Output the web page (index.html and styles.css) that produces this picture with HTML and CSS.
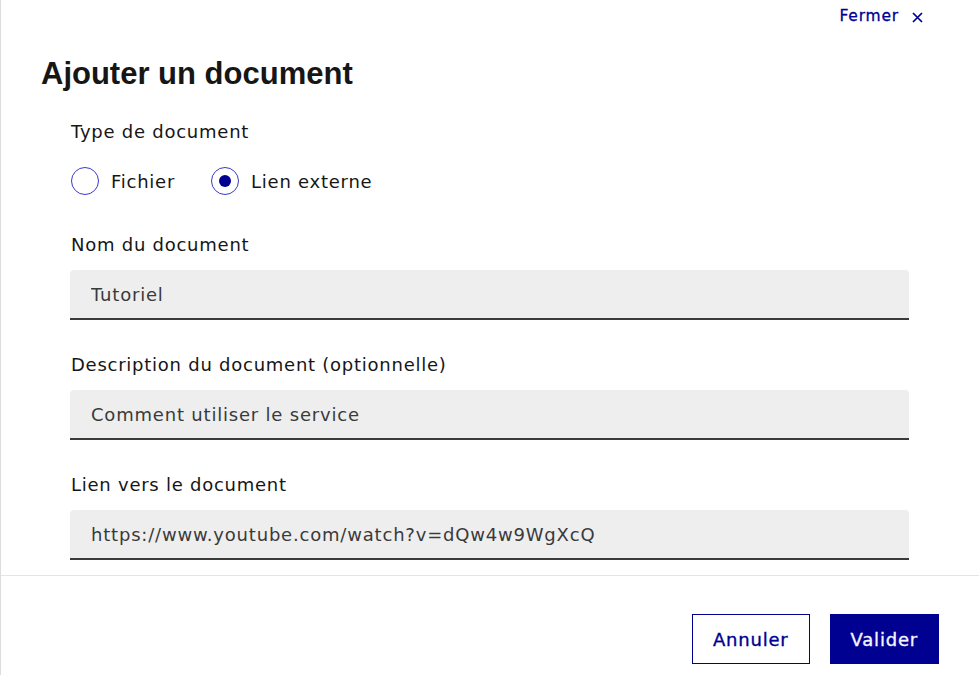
FILE: index.html
```html
<!DOCTYPE html>
<html lang="fr">
<head>
<meta charset="utf-8">
<title>Ajouter un document</title>
<link rel="stylesheet" href="styles.css">
</head>
<body>
<div class="modal">
  <div class="modal-body">
    <div class="close-row">
      <button class="close-btn" type="button">Fermer
        <svg class="close-icon" width="11" height="11" viewBox="0 0 11 11" aria-hidden="true"><path d="M1 1 L10 10 M10 1 L1 10" stroke="#000091" stroke-width="1.7" fill="none"/></svg>
      </button>
    </div>
    <h1 class="title">Ajouter un document</h1>
    <form class="form">
      <fieldset class="radio-group">
        <legend class="label">Type de document</legend>
        <div class="radios">
          <label class="radio"><input type="radio" name="type"><span>Fichier</span></label>
          <label class="radio"><input type="radio" name="type" checked><span>Lien externe</span></label>
        </div>
      </fieldset>
      <div class="field">
        <label class="label" for="nom">Nom du document</label>
        <input class="input" id="nom" type="text" value="Tutoriel">
      </div>
      <div class="field">
        <label class="label" for="desc">Description du document (optionnelle)</label>
        <input class="input" id="desc" type="text" value="Comment utiliser le service">
      </div>
      <div class="field">
        <label class="label" for="lien">Lien vers le document</label>
        <input class="input" id="lien" type="text" value="https://www.youtube.com/watch?v=dQw4w9WgXcQ">
      </div>
    </form>
  </div>
  <div class="modal-footer">
    <button class="btn btn-secondary" type="button">Annuler</button>
    <button class="btn btn-primary" type="button">Valider</button>
  </div>
</div>
</body>
</html>
```
FILE: styles.css
```css
* { box-sizing: border-box; }
html, body { margin: 0; padding: 0; background: #fff; }
body {
  font-family: "DejaVu Sans", "Noto Sans", sans-serif;
  color: #161616;
}
.modal {
  height: 675px;
  display: flex;
  flex-direction: column;
  border-left: 1px solid #dddddd;
}
.modal-body {
  flex: 1;
  padding: 4px 0 0 0;
}
.close-row {
  display: flex;
  justify-content: flex-end;
  padding-right: 56px;
  height: 24px;
}
.close-btn {
  font-family: "DejaVu Sans", sans-serif;
  font-size: 15.5px;
  line-height: 24px;
  letter-spacing: 0.8px;
  color: #000091;
  background: none;
  border: 0;
  padding: 0;
  display: flex;
  align-items: center;
  gap: 13px;
  -webkit-text-stroke: 0.3px #000091;
}
.close-icon { margin-top: 2px; }
.title {
  font-family: "Liberation Sans", Arial, sans-serif;
  font-weight: 700;
  font-size: 31px;
  line-height: 40px;
  margin: 26px 0 0 40px;
  color: #161616;
}
.form {
  padding: 24px 70px 0 69px;
}
.label {
  display: block;
  font-size: 18px;
  line-height: 27px;
  letter-spacing: 0.75px;
  padding-left: 1px;
  color: #161616;
}
.radio-group {
  border: 0;
  margin: 0;
  padding: 0;
}
.radio-group legend { padding: 0 0 0 1px; }
.radios {
  display: flex;
  gap: 35px;
  margin-top: 22px;
  height: 28px;
  align-items: center;
}
.radio {
  display: flex;
  align-items: center;
  gap: 12px;
  font-size: 18px;
  letter-spacing: 0.75px;
  line-height: 27px;
}
.radio input {
  appearance: none;
  -webkit-appearance: none;
  margin: 0 0 0 1px;
  width: 28px;
  height: 28px;
  border-radius: 50%;
  border: 1.5px solid #3a3ac8;
  background: #fff;
  display: grid;
  place-items: center;
}
.radio input:checked::after {
  content: "";
  width: 12px;
  height: 12px;
  border-radius: 50%;
  background: #000091;
}
.field { margin-top: 36px; }
.field + .field { margin-top: 31px; }
.field .label { margin-bottom: 12px; }
.input {
  display: block;
  width: 100%;
  height: 50px;
  border: 0;
  border-bottom: 2px solid #3a3a3a;
  border-radius: 4px 4px 0 0;
  background: #eeeeee;
  padding: 0 21px;
  font-family: "DejaVu Sans", sans-serif;
  font-size: 18px;
  letter-spacing: 0.8px;
  color: #3a3a3a;
  outline: none;
}
.modal-footer {
  height: 100px;
  border-top: 1px solid #e5e5e5;
  display: flex;
  justify-content: flex-end;
  align-items: flex-start;
  gap: 20px;
  padding: 38px 40px 0 0;
}
.btn {
  height: 50px;
  font-family: "DejaVu Sans", sans-serif;
  font-size: 18px;
  letter-spacing: 0.8px;
  padding: 0 20px;
  border-radius: 0;
  -webkit-text-stroke: 0.35px currentColor;
}
.btn-secondary {
  background: #fff;
  color: #000091;
  border: 1px solid #000091;
}
.btn-primary {
  background: #000091;
  color: #f5f5fe;
  border: 1px solid #000091;
}
```
